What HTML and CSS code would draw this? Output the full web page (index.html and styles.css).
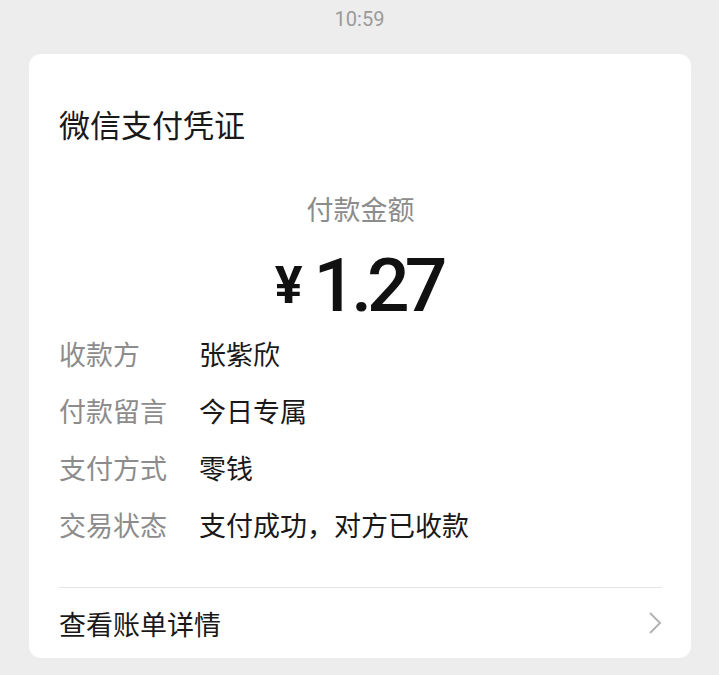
FILE: index.html
```html
<!DOCTYPE html>
<html lang="zh-CN">
<head>
    <meta charset="UTF-8">
    <meta name="viewport" content="width=device-width, initial-scale=1.0">
    <title>微信支付凭证</title>
    <link rel="stylesheet" href="styles.css">
</head>
<body>
    <div class="time">10:59</div>

    <div class="receipt_card">
        <h1 class="receipt_title">微信支付凭证</h1>

        <div class="amount_label">付款金额</div>
        <div class="amount"><span class="currency">¥</span>1.27</div>

        <ul class="info_list">
            <li><span class="info_key">收款方</span><span class="info_value">张紫欣</span></li>
            <li><span class="info_key">付款留言</span><span class="info_value">今日专属</span></li>
            <li><span class="info_key">支付方式</span><span class="info_value">零钱</span></li>
            <li><span class="info_key">交易状态</span><span class="info_value">支付成功，对方已收款</span></li>
        </ul>

        <div class="details_link">
            <span>查看账单详情</span>
            <svg class="chevron" width="14" height="24" viewBox="0 0 14 24">
                <path d="M2 2 L12 12 L2 22" fill="none" stroke="#b3b3b3" stroke-width="2"/>
            </svg>
        </div>
    </div>
</body>
</html>
```

FILE: styles.css
```css
body {
    margin: 0;
    background-color: #ededed;
    font-family: "Noto Sans CJK SC", "Noto Sans", sans-serif;
    color: #191919;
}

.time {
    height: 54px;
    line-height: 38px;
    text-align: center;
    font-family: Roboto, "Noto Sans", sans-serif;
    font-size: 20px;
    color: #9a9a9a;
}

.receipt_card {
    margin: 0 28px 0 29px;
    padding: 52px 29px 0 30px;
    background: #ffffff;
    border-radius: 12px;
}

.receipt_title {
    margin: 0;
    font-size: 31px;
    font-weight: 400;
    line-height: 36px;
}

.amount_label {
    margin-top: 49px;
    text-align: center;
    font-size: 27px;
    line-height: 36px;
    color: #8c8c8c;
}

.amount {
    margin-top: 19px;
    padding-right: 4px;
    text-align: center;
    font-family: Roboto, "Noto Sans", sans-serif;
    font-size: 75px;
    font-weight: 500;
    line-height: 78px;
    letter-spacing: -5px;
    color: #111111;
}

.currency {
    font-size: 52px;
    font-weight: 700;
    margin-right: 16px;
    vertical-align: 8px;
}

.info_list {
    list-style-type: none;
    margin: 0;
    padding: 0 0 34px;
    border-bottom: 1px solid #e5e5e5;
}

.info_list li {
    display: flex;
    font-size: 27px;
    line-height: 57px;
}

.info_key {
    width: 140px;
    color: #8c8c8c;
}

.details_link {
    display: flex;
    justify-content: space-between;
    align-items: center;
    height: 70px;
    font-size: 27px;
}
```
